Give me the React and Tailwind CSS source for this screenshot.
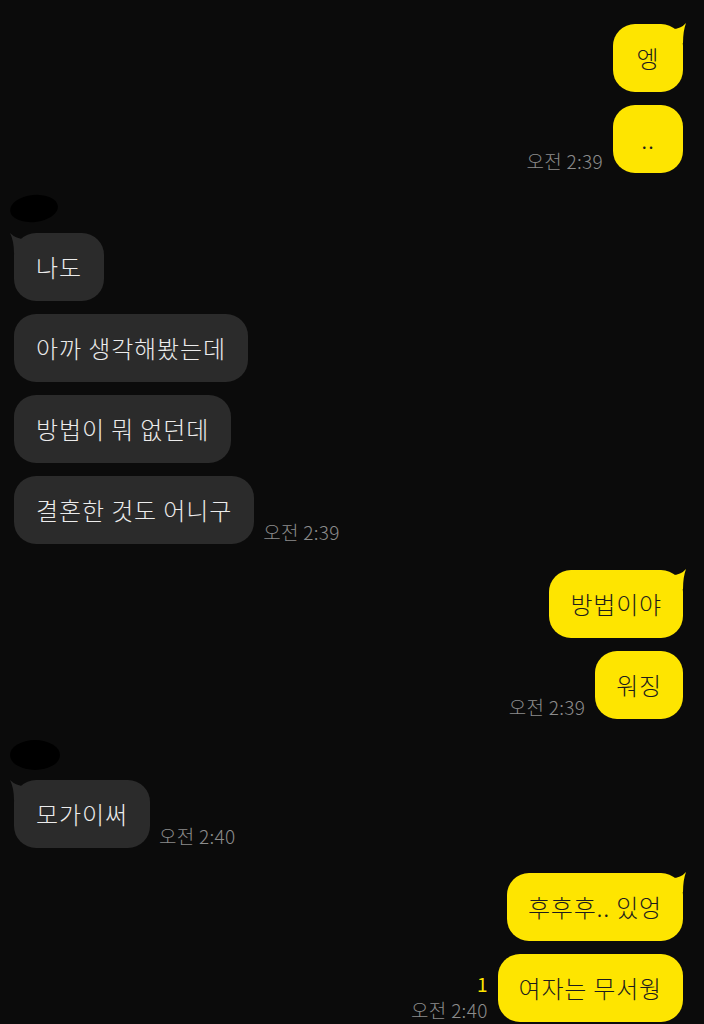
const FONT = { fontFamily: '"Noto Sans CJK KR", "Noto Sans", sans-serif' };

function Tail({ side, color }) {
  if (side === "right") {
    return (
      <svg className="absolute -right-[5px] top-[-1px]" width="16" height="20" viewBox="0 0 16 20">
        <path d="M0 6 Q 9 6 14 0 Q 11 8 11 20 L 0 20 Z" fill={color} />
      </svg>
    );
  }
  return (
    <svg className="absolute -left-[5px] top-[0px]" width="16" height="20" viewBox="0 0 16 20">
      <path d="M16 6 Q 7 6 1 0 Q 5 8 5 20 L 16 20 Z" fill={color} />
    </svg>
  );
}

function Time({ children, read }) {
  return (
    <div className="flex flex-col items-end pb-[3px] leading-none">
      {read && <span className="text-[19px] text-[#fee500] mb-[7px]">{read}</span>}
      <span className="text-[19px] font-light text-[#8c8c8c] tracking-[0.3px]">{children}</span>
    </div>
  );
}

function MyBubble({ text, tail, time, read, mb = "mb-[13px]" }) {
  return (
    <div className={`flex justify-end items-end gap-[10px] ${mb}`}>
      {time && <Time read={read}>{time}</Time>}
      <div className="relative h-[68px] min-w-[70px] rounded-[22px] bg-[#fee500] px-[21px] flex items-center justify-center">
        {tail && <Tail side="right" color="#fee500" />}
        <span className="text-[24px] font-light tracking-[0.8px] text-[#1c1c1c] whitespace-nowrap">{text}</span>
      </div>
    </div>
  );
}

function TheirBubble({ text, tail, time, mb = "mb-[13px]" }) {
  return (
    <div className={`flex items-end gap-[9px] ${mb}`}>
      <div className="relative h-[68px] rounded-[22px] bg-[#2b2b2b] px-[22px] flex items-center">
        {tail && <Tail side="left" color="#2b2b2b" />}
        <span className="text-[24px] font-light tracking-[0.9px] text-[#ececec] whitespace-nowrap">{text}</span>
      </div>
      {time && <Time>{time}</Time>}
    </div>
  );
}

function Blob({ className }) {
  return <div className={`rounded-[50%] bg-black ${className}`} />;
}

export default function App() {
  return (
    <div className="w-[704px] h-[1024px] overflow-hidden bg-[#0b0b0b] pl-[14px] pr-[21px] pt-[24px]" style={FONT}>
      <MyBubble text="엥" tail />
      <MyBubble text=".." time="오전 2:39" mb="mb-[22px]" />

      <Blob className="w-[48px] h-[27px] -ml-[4px] mb-[11px] -rotate-6" />
      <TheirBubble text="나도" tail />
      <TheirBubble text="아까 생각해봤는데" />
      <TheirBubble text="방법이 뭐 없던데" />
      <TheirBubble text="결혼한 것도 어니구" time="오전 2:39" mb="mb-[26px]" />

      <MyBubble text="방법이야" tail />
      <MyBubble text="워징" time="오전 2:39" mb="mb-[21px]" />

      <Blob className="w-[50px] h-[30px] -ml-[4px] mb-[10px]" />
      <TheirBubble text="모가이써" tail time="오전 2:40" mb="mb-[25px]" />

      <MyBubble text="후후후.. 있엉" tail />
      <MyBubble text="여자는 무서웡" time="오전 2:40" read="1" mb="mb-0" />
    </div>
  );
}
